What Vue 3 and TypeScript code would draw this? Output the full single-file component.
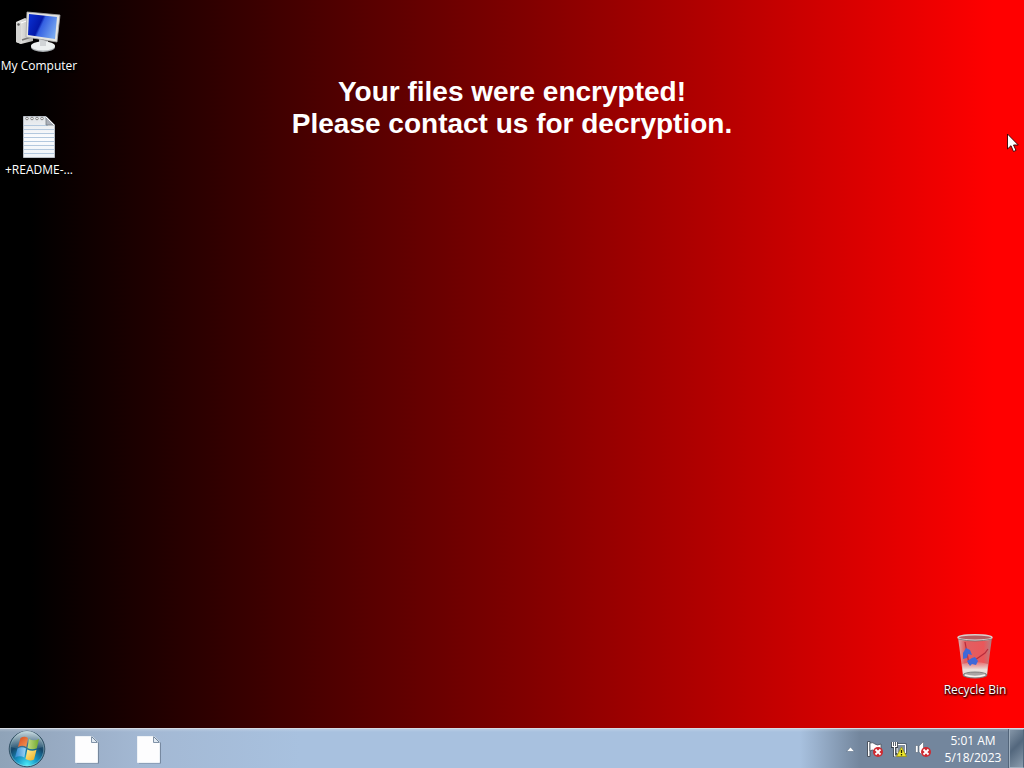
<script setup lang="ts">
import { ref } from 'vue'

interface PinnedFile {
  id: number
  label: string
}

const pinned: PinnedFile[] = [
  { id: 1, label: 'Pinned file 1' },
  { id: 2, label: 'Pinned file 2' },
]
const time = ref('5:01 AM')
const date = ref('5/18/2023')
</script>

<template>
  <div class="screen">
    <main class="desktop">
      <nav class="icons">
        <button class="icon" type="button">
          <svg width="48" height="48" viewBox="0 0 48 48" aria-hidden="true">
            <defs>
              <linearGradient id="scr" x1="0" y1="0.2" x2="1" y2="0.6">
                <stop offset="0" stop-color="#0a2fd0" />
                <stop offset="0.42" stop-color="#0318a8" />
                <stop offset="0.5" stop-color="#3460e2" />
                <stop offset="1" stop-color="#78a8f0" />
              </linearGradient>
              <linearGradient id="tower" x1="0" y1="0" x2="1" y2="0">
                <stop offset="0" stop-color="#f2f2f0" />
                <stop offset="1" stop-color="#b5b5b3" />
              </linearGradient>
            </defs>
            <path d="M1 14 10 10 18 13V33L6 36 1 34Z" fill="url(#tower)" />
            <path d="M1 14 6 15V36L1 34Z" fill="#d4d4d2" />
            <path d="M6 15 14 12" stroke="#fff" fill="none" />
            <circle cx="3.5" cy="16.5" r="1.2" fill="#555" />
            <path d="M7 32 16 29" stroke="#777" stroke-width="1.5" />
            <path d="M24 31 33 33 34 39H24Z" fill="#c4c6c8" />
            <ellipse cx="28" cy="39" rx="12" ry="5" fill="#a9adb0" />
            <ellipse cx="28" cy="38" rx="12" ry="4.5" fill="#edf0f0" />
            <path d="M25 31 31 33V38H25Z" fill="#d1d4d6" />
            <path d="M12 4 45 7 42 34 11 29Z" fill="#e5e5e1" stroke="#a7a8a8" stroke-width="0.8" />
            <path d="M14 6 42 9 40 31 13 27Z" fill="url(#scr)" />
          </svg>
          <span>My Computer</span>
        </button>
        <button class="icon" type="button">
          <svg width="48" height="48" viewBox="0 0 48 48" aria-hidden="true">
            <defs>
              <linearGradient id="paper" x1="0" y1="0" x2="0" y2="1">
                <stop offset="0" stop-color="#dfe3e7" />
                <stop offset="0.5" stop-color="#fbfcfe" />
                <stop offset="1" stop-color="#eef2f7" />
              </linearGradient>
            </defs>
            <path d="M8.5 4.5H31L39.5 13V45.5H8.5Z" fill="url(#paper)" stroke="#b8bec6" />
            <path
              d="M9 13.5H33M9 17.5H39M9 21.5H39M9 25.5H39M9 29.5H39M9 33.5H39M9 37.5H39M9 41.5H39"
              stroke="#b3c8de"
            />
            <path d="M31 5V13H39Z" fill="#aaafb8" stroke="#777d86" stroke-width="0.8" />
            <path d="M31 5 39 13" stroke="#fff" stroke-width="1" />
            <g fill="#fff" stroke="#777" stroke-width="0.9">
              <circle cx="12" cy="6.5" r="1.3" />
              <circle cx="17" cy="6.5" r="1.3" />
              <circle cx="22" cy="6.5" r="1.3" />
              <circle cx="27" cy="6.5" r="1.3" />
            </g>
          </svg>
          <span>+README-...</span>
        </button>
      </nav>

      <h1 class="notice">
        Your files were encrypted!<br />
        Please contact us for decryption.
      </h1>

      <button class="icon bin" type="button">
        <svg width="48" height="48" viewBox="0 0 48 48" aria-hidden="true">
          <defs>
            <linearGradient id="glass" x1="0" y1="0" x2="1" y2="0">
              <stop offset="0" stop-color="#d9b9b9" stop-opacity="0.95" />
              <stop offset="0.2" stop-color="#dc787b" stop-opacity="0.8" />
              <stop offset="0.75" stop-color="#e47478" stop-opacity="0.75" />
              <stop offset="1" stop-color="#a7898c" stop-opacity="0.95" />
            </linearGradient>
            <linearGradient id="base" x1="0" y1="0" x2="0" y2="1">
              <stop offset="0" stop-color="#e5d3cf" stop-opacity="0.2" />
              <stop offset="0.5" stop-color="#eeebe4" stop-opacity="0.95" />
              <stop offset="1" stop-color="#c9ccca" />
            </linearGradient>
          </defs>
          <path d="M7 5H41L36 44Q24 49 12 44Z" fill="url(#glass)" />
          <path d="M11 32Q24 28 37 32L36 43Q24 48 12 43Z" fill="url(#base)" />
          <path d="M24 28 34 21 37 17M14 10 18 32" fill="none" stroke="#b92c3c" stroke-width="1.2" />
          <path d="M12 21 15 16 19 18 21 23 17 22 16 26 12 27ZM16 29 21 26 24 25 27 29 25 33 21 32 19 34Z" fill="#3f68d8" />
          <ellipse cx="24" cy="43" rx="12" ry="3" fill="#aaa5a4" stroke="#716e6e" stroke-width="0.8" />
          <path d="M14 43Q24 46 34 43" fill="none" stroke="#f2f2ee" stroke-width="1.5" />
          <ellipse cx="24" cy="5.5" rx="17" ry="2.8" fill="#b65c60" stroke="#d8d0cd" stroke-width="1.5" />
          <path d="M7 7Q24 11 41 7" fill="none" stroke="#77696a" stroke-width="0.8" />
        </svg>
        <span>Recycle Bin</span>
      </button>

      <svg class="pointer" width="12" height="20" viewBox="0 0 12 20" aria-hidden="true">
        <path
          d="M0.500 1V16L4 12.7 6.5 18.5 9 17.4 6.5 12H11.3Z"
          fill="#fff"
          stroke="#310000"
          stroke-width="0.9"
        />
      </svg>
    </main>

    <footer class="taskbar">
      <button class="start" type="button" aria-label="Start">
        <svg width="38" height="38" viewBox="0 0 38 38" aria-hidden="true">
          <defs>
            <radialGradient id="orb" cx="0.5" cy="0.95" r="0.85">
              <stop offset="0" stop-color="#4cebf7" />
              <stop offset="0.35" stop-color="#1695c5" />
              <stop offset="0.7" stop-color="#154669" />
              <stop offset="1" stop-color="#4c6c80" />
            </radialGradient>
            <linearGradient id="gloss" x1="0" y1="0" x2="0" y2="1">
              <stop offset="0" stop-color="#e0edf1" stop-opacity="0.85" />
              <stop offset="1" stop-color="#8cabb8" stop-opacity="0.15" />
            </linearGradient>
            <linearGradient id="pr" x1="0" y1="0" x2="1" y2="1">
              <stop offset="0" stop-color="#d6481d" />
              <stop offset="1" stop-color="#f59a57" />
            </linearGradient>
            <linearGradient id="pg" x1="0" y1="0" x2="1" y2="0">
              <stop offset="0" stop-color="#c1dc83" />
              <stop offset="1" stop-color="#71a92d" />
            </linearGradient>
            <linearGradient id="pb" x1="0" y1="0" x2="1" y2="0">
              <stop offset="0" stop-color="#3188d3" />
              <stop offset="1" stop-color="#9dd6f4" />
            </linearGradient>
            <linearGradient id="py" x1="0" y1="0" x2="1" y2="1">
              <stop offset="0" stop-color="#fff09a" />
              <stop offset="1" stop-color="#efaa19" />
            </linearGradient>
          </defs>
          <circle cx="19" cy="19" r="17.8" fill="url(#orb)" stroke="#314f63" />
          <path d="M3 17A16 16 0 0 1 35 17Q19 22 3 17Z" fill="url(#gloss)" />
          <path d="M12.500 8Q16.500 5.500 20 8L18.300 17Q14.500 14.500 10 17Z" fill="url(#pr)" />
          <path d="M21 9Q26 11.500 31 9L28.800 18.300Q24 20.500 19.500 18Z" fill="url(#pg)" />
          <path d="M9.500 18.500Q14 16 18 18.500L16.300 27.500Q12 25 7 27.500Z" fill="url(#pb)" />
          <path d="M19.300 19.500Q24 22 28.500 19.800L26 29.500Q22 31.500 17.500 29Z" fill="url(#py)" />
          <circle cx="19" cy="19" r="16.8" fill="none" stroke="#b9dbe4" stroke-opacity="0.5" stroke-width="0.8" />
        </svg>
      </button>
      <div class="pins">
        <button v-for="file in pinned" :key="file.id" class="pin" type="button" :aria-label="file.label">
          <svg width="26" height="30" viewBox="0 0 26 30" aria-hidden="true">
            <path d="M3 4H20L25 9V29.500H3Z" fill="#64758a" fill-opacity="0.7" />
            <path d="M1.500 2.500H18L23.500 8V28.500H1.500Z" fill="#fdfdfe" stroke="#eef2f6" />
            <path d="M17.500 3V8.500H23" fill="#dfe8f1" stroke="#8193a8" />
            <path d="M17.500 2.500 23.500 8.500" stroke="#71869c" />
          </svg>
        </button>
      </div>

      <div class="tray">
        <button class="tray-button" type="button" aria-label="Show hidden icons">
          <svg width="16" height="16" viewBox="0 0 16 16" aria-hidden="true">
            <path d="M3.500 10.500 7.500 6 11.500 10.500Z" fill="#fff" stroke="#5d7188" stroke-width="0.6" />
          </svg>
        </button>
        <button class="tray-button" type="button" aria-label="Action center">
          <svg width="16" height="16" viewBox="0 0 16 16" aria-hidden="true">
            <path d="M0.500 0.500H3V15.500H0.500Z" fill="#fff" stroke="#4b535e" />
            <path d="M3 2Q6 1 8 3T14 3V10Q11 12 8 10T3 10Z" fill="#fff" stroke="#4b535e" stroke-width="0.8" />
            <circle cx="11" cy="11" r="5" fill="#cf2930" />
            <path d="M8.500 8.500 13.500 13.500M13.500 8.500 8.500 13.500" stroke="#fff" stroke-width="1.8" />
          </svg>
        </button>
        <button class="tray-button" type="button" aria-label="Network">
          <svg width="16" height="16" viewBox="0 0 16 16" aria-hidden="true">
            <path d="M5 2.500H15.500V13H5Z" fill="#353f48" />
            <path d="M6 3.500H14.500V12H6Z" fill="#8290a0" stroke="#fff" />
            <path d="M1.500 1V5.500H5.500V1M3.500 1V15H7" fill="none" stroke="#353f48" stroke-width="2.8" />
            <path d="M1.500 1V5.500H5.500V1M3.500 1V15H7" fill="none" stroke="#fff" stroke-width="1.2" />
            <path d="M10.500 6 15.500 15.500H5.500Z" fill="#ede52a" stroke="#999217" stroke-width="0.8" />
            <path d="M10.500 9V12M10.500 13V14.500" stroke="#252600" stroke-width="1.3" />
          </svg>
        </button>
        <button class="tray-button" type="button" aria-label="Volume">
          <svg width="16" height="16" viewBox="0 0 16 16" aria-hidden="true">
            <path d="M0.500 4.500H3V11.500H0.500ZM4 5 8.500 0.500V15.500L4 11Z" fill="#fff" stroke="#596777" stroke-width="0.6" />
            <circle cx="11" cy="11" r="5" fill="#cf2930" />
            <path d="M8.500 8.500 13.500 13.500M13.500 8.500 8.500 13.500" stroke="#fff" stroke-width="1.8" />
          </svg>
        </button>
        <button class="clock" type="button">
          <span>{{ time }}</span>
          <span>{{ date }}</span>
        </button>
        <button class="peek" type="button" aria-label="Show desktop"></button>
      </div>
    </footer>
  </div>
</template>

<style>
body {
  margin: 0;
  background: #000;
}
</style>

<style scoped>
.screen {
  display: flex;
  flex-direction: column;
  height: 100vh;
  overflow: hidden;
  background: linear-gradient(90deg, #000 3%, #800000 51%, #f00 97%);
  font-family: "Open Sans", "Noto Sans", sans-serif;
  font-size: 12px;
}

button {
  padding: 0;
  border: 0;
  background: none;
  color: #fff;
  font: inherit;
}

svg {
  display: block;
  flex: none;
}

.desktop {
  position: relative;
  flex: 1;
  min-height: 0;
}

.icons {
  position: absolute;
  top: 8px;
  left: 0;
  display: flex;
  flex-direction: column;
  gap: 37px;
}

.icon {
  display: flex;
  flex-direction: column;
  align-items: center;
  gap: 1px;
  width: 78px;
  line-height: 18px;
  white-space: nowrap;
  text-shadow: 1px 1px 2px #000, 0 1px 2px #000;
}

.bin {
  position: absolute;
  right: 10px;
  bottom: 29px;
}

.notice {
  margin: 0;
  padding-top: 76px;
  color: #fff;
  font-family: "Liberation Sans", Arial, sans-serif;
  font-size: 28px;
  font-weight: 700;
  line-height: 32px;
  text-align: center;
}

.pointer {
  position: absolute;
  top: 133px;
  right: 5px;
}

.taskbar {
  display: flex;
  align-items: stretch;
  box-sizing: border-box;
  height: 40px;
  border-top: 1px solid #d5dbe4;
  background:
    linear-gradient(180deg, rgba(255, 255, 255, 0.2), transparent 3px),
    linear-gradient(90deg, transparent calc(100% - 224px), #73869d calc(100% - 164px)),
    linear-gradient(90deg, #8fa3b8 0, #98abc3 60px, #a3b8d3 140px, #a8c1df 300px);
}

.start {
  display: flex;
  align-items: center;
  justify-content: center;
  width: 54px;
}

.pins {
  display: flex;
  padding-left: 2px;
}

.pin {
  display: flex;
  align-items: center;
  justify-content: center;
  width: 62px;
}

.tray {
  display: flex;
  align-items: center;
  gap: 8px;
  margin-left: auto;
}

.clock {
  display: flex;
  flex-direction: column;
  align-items: center;
  width: 68px;
  line-height: 17px;
}

.peek {
  align-self: stretch;
  box-sizing: border-box;
  width: 15px;
  margin-left: -6px;
  border: 1px solid #9fafbf;
  border-right-color: #52657a;
  background: linear-gradient(135deg, #8495a7, #53677d 45%, #8b9cad);
  box-shadow: -1px 0 #53657a;
}
</style>
